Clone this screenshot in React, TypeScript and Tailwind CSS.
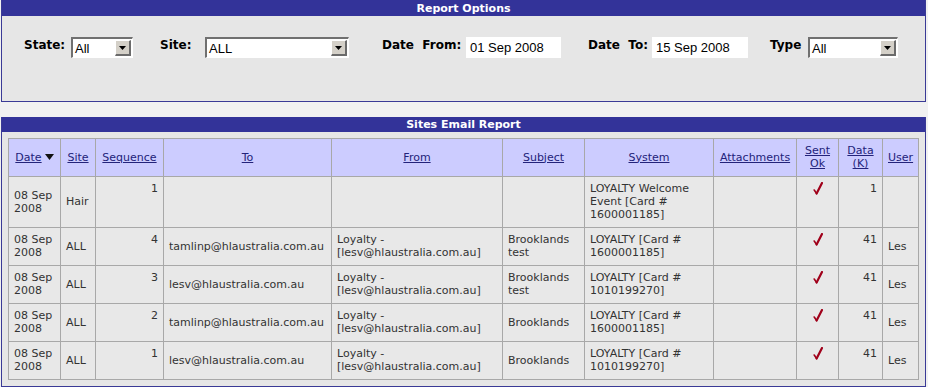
import React from "react";

type Row = {
  seq: string;
  site: string;
  to: string;
  from: string[];
  subject: string[];
  system: string[];
  data: string;
  user: string;
};

const rows: Row[] = [
  {
    seq: "1",
    site: "Hair",
    to: "",
    from: [],
    subject: [],
    system: ["LOYALTY Welcome", "Event [Card #", "1600001185]"],
    data: "1",
    user: "",
  },
  {
    seq: "4",
    site: "ALL",
    to: "tamlinp@hlaustralia.com.au",
    from: ["Loyalty -", "[lesv@hlaustralia.com.au]"],
    subject: ["Brooklands", "test"],
    system: ["LOYALTY [Card #", "1600001185]"],
    data: "41",
    user: "Les",
  },
  {
    seq: "3",
    site: "ALL",
    to: "lesv@hlaustralia.com.au",
    from: ["Loyalty -", "[lesv@hlaustralia.com.au]"],
    subject: ["Brooklands", "test"],
    system: ["LOYALTY [Card #", "1010199270]"],
    data: "41",
    user: "Les",
  },
  {
    seq: "2",
    site: "ALL",
    to: "tamlinp@hlaustralia.com.au",
    from: ["Loyalty -", "[lesv@hlaustralia.com.au]"],
    subject: ["Brooklands"],
    system: ["LOYALTY [Card #", "1600001185]"],
    data: "41",
    user: "Les",
  },
  {
    seq: "1",
    site: "ALL",
    to: "lesv@hlaustralia.com.au",
    from: ["Loyalty -", "[lesv@hlaustralia.com.au]"],
    subject: ["Brooklands"],
    system: ["LOYALTY [Card #", "1010199270]"],
    data: "41",
    user: "Les",
  },
];

function Lines({ items }: { items: string[] }) {
  return (
    <>
      {items.map((t, i) => (
        <div key={i} className="whitespace-nowrap">
          {t}
        </div>
      ))}
    </>
  );
}

function Select({ width, value }: { width: string; value: string }) {
  return (
    <div
      className={`flex h-[21px] ${width} items-stretch border-t-2 border-l-2 border-t-[#707070] border-l-[#707070] border-b border-r border-b-white border-r-white bg-white`}
    >
      <span className="flex-1 pl-[2px] pt-[2px] font-['Liberation_Sans',Arial,sans-serif] text-[13px] leading-[15px] text-black">
        {value}
      </span>
      <span className="m-[1px] flex w-[16px] items-center justify-center border-t border-l border-t-white border-l-white border-b-2 border-r-2 border-b-[#6b6b6b] border-r-[#6b6b6b] bg-[#d4d0c8]">
        <svg width="7" height="4" viewBox="0 0 7 4">
          <path d="M0 0 H7 L3.5 4 Z" fill="#000" />
        </svg>
      </span>
    </div>
  );
}

function TextBox({ width, value }: { width: string; value: string }) {
  return (
    <div
      className={`h-[21px] ${width} bg-white pl-[4px] pt-[3px] font-['Liberation_Sans',Arial,sans-serif] text-[13px] leading-[15px] text-black`}
    >
      {value}
    </div>
  );
}

function Check() {
  return (
    <svg width="10" height="13" viewBox="0 0 10 13" className="mx-auto">
      <path d="M1.2 8 L3.6 11.5" stroke="#a0001a" strokeWidth="1.6" fill="none" strokeLinecap="round" />
      <path d="M3.6 11.5 L9 1" stroke="#a0001a" strokeWidth="2.2" fill="none" strokeLinecap="round" />
    </svg>
  );
}

const th =
  "border border-[#a8a8a8] bg-[#ccccff] px-[5px] pt-[5px] pb-[6px] text-center align-middle font-normal text-[#23237a]";
const td = "border border-[#a8a8a8] bg-[#e8e8e8] px-[5px] pt-[5px] pb-[6px] align-middle";
const tdTop = "border border-[#a8a8a8] bg-[#e8e8e8] px-[5px] pt-[5px] pb-[6px] align-top";

export default function App() {
  return (
    <div className="h-[387px] w-[928px] bg-[#f1f1f1] font-['DejaVu_Sans',Verdana,sans-serif] text-[11px] leading-[13px] text-[#333]">
      {/* report options */}
      <div className="ml-[1px] w-[925px] border-x border-b border-[#3a3a96] bg-[#e6e6e6]">
        <div className="flex h-[16px] items-center justify-center bg-[#333399] font-bold text-white">
          Report Options
        </div>
        <div className="flex h-[85px] items-start pl-[22px] pt-[21px]">
          <span className="w-[47px] text-[12px] font-bold leading-[16px] text-black">State:</span>
          <Select width="w-[62px]" value="All" />
          <span className="ml-[27px] w-[45px] text-[12px] font-bold leading-[16px] text-black">Site:</span>
          <Select width="w-[144px]" value="ALL" />
          <span className="ml-[33px] w-[84px] whitespace-pre text-[12px] font-bold leading-[16px] text-black">
            {"Date  From:"}
          </span>
          <TextBox width="w-[95px]" value="01 Sep 2008" />
          <span className="ml-[27px] w-[64px] whitespace-pre text-[12px] font-bold leading-[16px] text-black">
            {"Date  To:"}
          </span>
          <TextBox width="w-[96px]" value="15 Sep 2008" />
          <span className="ml-[22px] w-[38px] text-[12px] font-bold leading-[16px] text-black">Type</span>
          <Select width="w-[90px]" value="All" />
        </div>
      </div>

      {/* sites email report */}
      <div className="mt-[15px] ml-[1px] w-[925px] border-x border-b border-[#3a3a96] bg-[#e6e6e6] pb-[6px]">
        <div className="flex h-[15px] items-center justify-center bg-[#333399] font-bold text-white">
          Sites Email Report
        </div>
        <table className="mt-[6px] ml-[6px] w-[910px] table-fixed border-collapse">
          <colgroup>
            <col className="w-[52px]" />
            <col className="w-[35px]" />
            <col className="w-[68px]" />
            <col className="w-[168px]" />
            <col className="w-[171px]" />
            <col className="w-[82px]" />
            <col className="w-[129px]" />
            <col className="w-[83px]" />
            <col className="w-[42px]" />
            <col className="w-[44px]" />
            <col className="w-[36px]" />
          </colgroup>
          <thead>
            <tr>
              <th className={th}>
                <span className="inline-flex items-center gap-[3px]">
                  <span className="underline">Date</span>
                  <svg width="9" height="6" viewBox="0 0 9 6">
                    <path d="M0 0 H9 L4.5 6 Z" fill="#111" />
                  </svg>
                </span>
              </th>
              <th className={th}>
                <span className="underline">Site</span>
              </th>
              <th className={th}>
                <span className="underline">Sequence</span>
              </th>
              <th className={th}>
                <span className="underline">To</span>
              </th>
              <th className={th}>
                <span className="underline">From</span>
              </th>
              <th className={th}>
                <span className="underline">Subject</span>
              </th>
              <th className={th}>
                <span className="underline">System</span>
              </th>
              <th className={th}>
                <span className="underline">Attachments</span>
              </th>
              <th className={th}>
                <div className="underline">Sent</div>
                <div className="underline">Ok</div>
              </th>
              <th className={th}>
                <div className="underline">Data</div>
                <div className="underline">(K)</div>
              </th>
              <th className={th}>
                <span className="underline">User</span>
              </th>
            </tr>
          </thead>
          <tbody>
            {rows.map((r, i) => (
              <tr key={i}>
                <td className={td}>
                  <Lines items={["08 Sep", "2008"]} />
                </td>
                <td className={td}>{r.site}</td>
                <td className={`${tdTop} text-right`}>{r.seq}</td>
                <td className={`${td} whitespace-nowrap`}>{r.to}</td>
                <td className={td}>
                  <Lines items={r.from} />
                </td>
                <td className={td}>
                  <Lines items={r.subject} />
                </td>
                <td className={td}>
                  <Lines items={r.system} />
                </td>
                <td className={td}></td>
                <td className={`${tdTop} text-center`}>
                  <Check />
                </td>
                <td className={`${tdTop} text-right`}>{r.data}</td>
                <td className={td}>{r.user}</td>
              </tr>
            ))}
          </tbody>
        </table>
      </div>
    </div>
  );
}
